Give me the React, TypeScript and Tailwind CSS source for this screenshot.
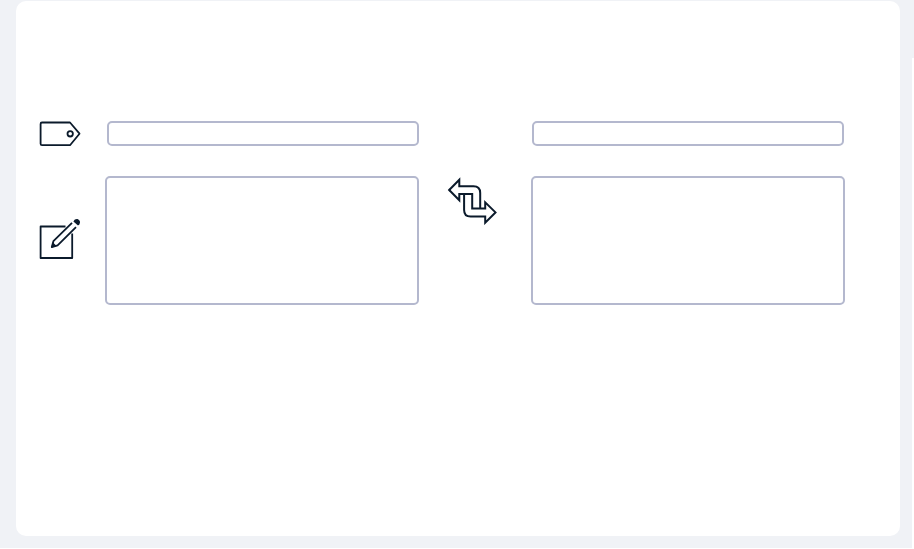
function TagIcon() {
  return (
    <svg width="42" height="26" viewBox="39 121 42 26" fill="none" stroke="#0b1a2b" strokeWidth="1.8" strokeLinejoin="round">
      <path d="M42 122.5H70L79.5 133.7L70 145.2H42Q40.6 145.2 40.6 143.8V123.9Q40.6 122.5 42 122.5Z" />
      <circle cx="70.2" cy="133.8" r="2.7" />
    </svg>
  );
}

function EditIcon() {
  return (
    <svg width="42" height="42" viewBox="39 218 42 42" fill="none" stroke="#0b1a2b" strokeWidth="1.8" strokeLinejoin="round">
      <path d="M65.5 226.5H40.6V258H72.2V233.5" />
      <path d="M72 222.8L53.4 241.2L51.8 247.1L57.6 245.4L76 227.2" strokeWidth="1.8" />
      <path d="M52.8 242.2L51.2 247.7L56.6 246.1Z" fill="#0b1a2b" stroke="none" />
      <path d="M73.4 221.6C74.4 219.4 76.2 218.7 78 219.3C80 220.2 80.7 222.6 79.4 224.2L78 225.6Z" fill="#0b1a2b" stroke="none" />
    </svg>
  );
}

function SwapIcon() {
  return (
    <svg width="50" height="48" viewBox="447 177 50 48" fill="none" stroke="#0b1a2b" strokeWidth="2" strokeLinejoin="miter">
      <path d="M449.2 190L459.3 179.8V186.3H473.5Q480.2 186.3 480.2 193V208.5" />
      <path d="M449.2 190L459.3 200.3V194H472.2V208.5H485.2V202.3L495.5 212.4L485.2 222.7V216.6H470.6Q464.1 216.6 464.1 210V194" />
      <path d="M450 189.2L449.2 190L450 190.8" />
    </svg>
  );
}

export default function App() {
  return (
    <main className="relative h-[548px] w-[914px] bg-[#f0f2f6] pl-4 pt-px">
      <section className="flex h-[535px] w-[884px] items-start rounded-[10px] bg-white pl-[23px] pt-[120px]">
        <div className="flex w-[66px] flex-col gap-[71px]">
          <TagIcon />
          <EditIcon />
        </div>
        <div className="flex w-[314px] flex-col items-end gap-[30px]">
          <input aria-label="Name" className="block h-[25px] w-[312px] rounded-[5px] border-2 border-[#b4b8ce] bg-white px-2 outline-none" />
          <textarea aria-label="Text" className="block h-[129px] w-[314px] resize-none rounded-[5px] border-2 border-[#b4b8ce] bg-white p-2 outline-none" />
        </div>
        <div className="w-[112px] pl-7 pt-14">
          <SwapIcon />
        </div>
        <div className="flex w-[314px] flex-col items-center gap-[30px]">
          <input aria-label="Swapped name" className="block h-[25px] w-[312px] rounded-[5px] border-2 border-[#b4b8ce] bg-white px-2 outline-none" />
          <textarea aria-label="Swapped text" className="block h-[129px] w-[314px] resize-none rounded-[5px] border-2 border-[#b4b8ce] bg-white p-2 outline-none" />
        </div>
      </section>
      <div className="absolute right-0 top-[58px] h-[490px] w-0.5 bg-white" />
    </main>
  );
}
